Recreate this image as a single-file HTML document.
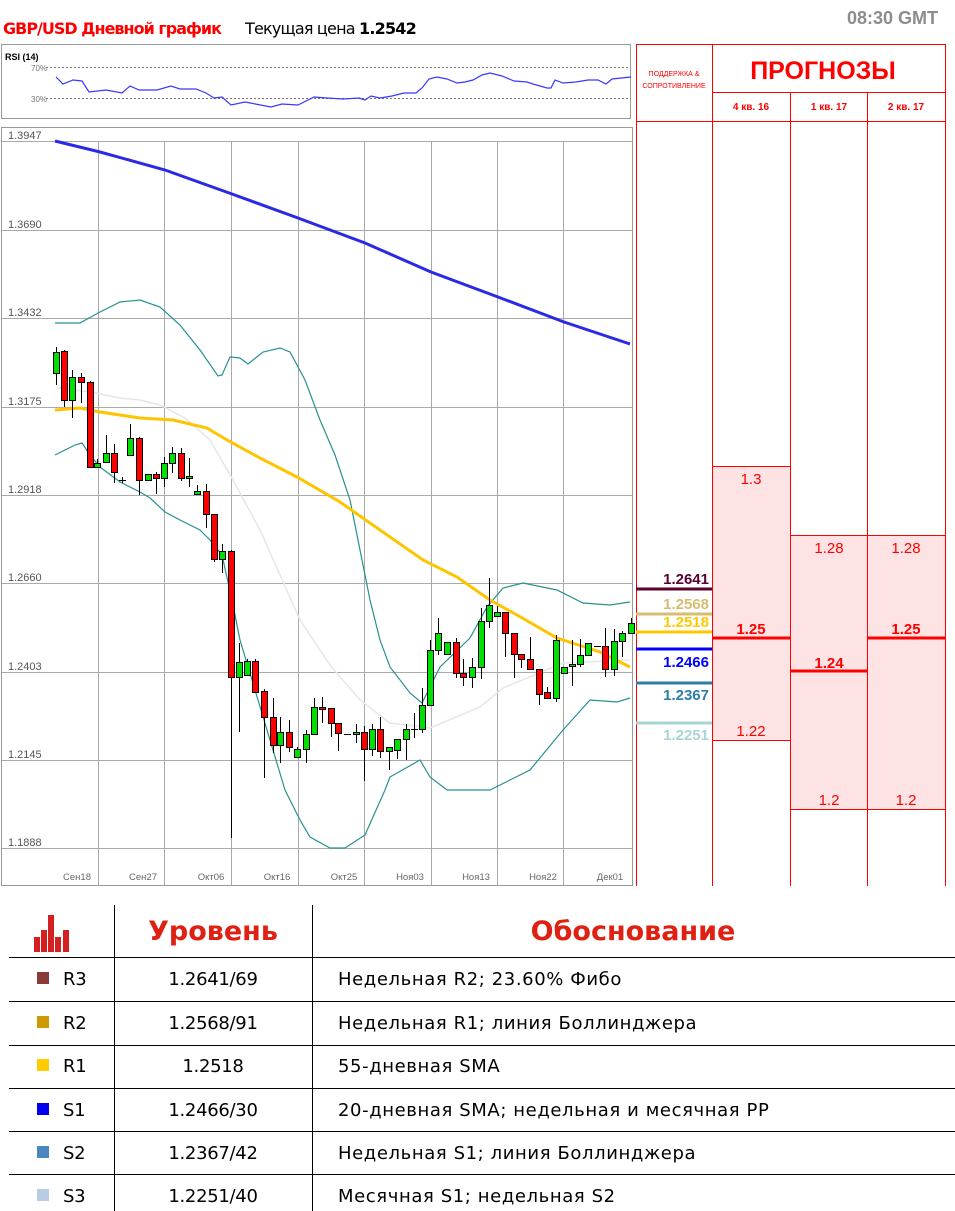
<!DOCTYPE html>
<html><head><meta charset="utf-8"><style>
html,body{margin:0;padding:0;background:#fff;width:955px;height:1211px;overflow:hidden}
svg{display:block;font-family:"Liberation Sans","DejaVu Sans",sans-serif}
</style></head><body>
<svg width="955" height="1211" viewBox="0 0 955 1211" xmlns="http://www.w3.org/2000/svg">
<!-- header -->
<text x="3" y="34" font-size="16" font-weight="bold" fill="#ff0000" font-family="DejaVu Sans,sans-serif" letter-spacing="-1">GBP/USD Дневной график</text>
<text x="245" y="34" font-size="16" fill="#000" font-family="DejaVu Sans,sans-serif" letter-spacing="-0.8">Текущая цена <tspan font-weight="bold">1.2542</tspan></text>
<text x="938" y="24" font-size="18" font-weight="bold" fill="#8c8c8c" text-anchor="end">08:30 GMT</text>

<!-- RSI panel -->
<rect x="1.5" y="44.5" width="629" height="74" fill="#fff" stroke="#999"/>
<text x="5" y="60" font-size="9" font-weight="bold" fill="#000">RSI (14)</text>
<text x="31" y="71" font-size="8" fill="#777">70%</text>
<text x="31" y="102" font-size="8" fill="#777">30%</text>
<line x1="46" y1="67.5" x2="630" y2="67.5" stroke="#777" stroke-dasharray="2,2"/>
<line x1="46" y1="98.5" x2="630" y2="98.5" stroke="#777" stroke-dasharray="2,2"/>
<polyline fill="none" stroke="#3838ff" stroke-width="1.2" points="56,77 63,84 73,80 82,81 89,92 106,90 122,93 130,86 139,90 157,90 171,86 180,89 196,89 206,93 214,98 222,97 231,105 245,102 271,107 282,104 298,105 314,97 327,98 343,99 359,98 365,100 371,96 380,98 392,96 404,93 416,93 422,88 429,79 437,77 447,79 457,83 465,82 473,80 482,75 490,73 502,76 514,81 527,82 533,84 547,88 551,88 555,80 563,83 576,82 588,80 598,80 606,84 612,79 631,77"/>

<!-- main chart frame -->
<rect x="1.5" y="127.5" width="631" height="758" fill="#fff" stroke="#999"/>
<g stroke="#aaa" stroke-width="1">
<line x1="2" y1="141.5" x2="632" y2="141.5"/><line x1="2" y1="230.5" x2="632" y2="230.5"/>
<line x1="2" y1="318.5" x2="632" y2="318.5"/><line x1="2" y1="407.5" x2="632" y2="407.5"/>
<line x1="2" y1="495.5" x2="632" y2="495.5"/><line x1="2" y1="583.5" x2="632" y2="583.5"/>
<line x1="2" y1="672.5" x2="632" y2="672.5"/><line x1="2" y1="760.5" x2="632" y2="760.5"/>
<line x1="2" y1="848.5" x2="632" y2="848.5"/>
<line x1="98.5" y1="141" x2="98.5" y2="885"/><line x1="164.5" y1="141" x2="164.5" y2="885"/>
<line x1="231.5" y1="141" x2="231.5" y2="885"/><line x1="298.5" y1="141" x2="298.5" y2="885"/>
<line x1="364.5" y1="141" x2="364.5" y2="885"/><line x1="431.5" y1="141" x2="431.5" y2="885"/>
<line x1="497.5" y1="141" x2="497.5" y2="885"/><line x1="563.5" y1="141" x2="563.5" y2="885"/>
</g>
<g font-size="11" fill="#555">
<text x="8" y="139">1.3947</text><text x="8" y="228">1.3690</text><text x="8" y="316">1.3432</text>
<text x="8" y="405">1.3175</text><text x="8" y="493">1.2918</text><text x="8" y="581">1.2660</text>
<text x="8" y="670">1.2403</text><text x="8" y="758">1.2145</text><text x="8" y="846">1.1888</text>
</g>
<g font-size="9.5" fill="#666" text-anchor="middle">
<text x="77" y="880">Сен18</text><text x="143" y="880">Сен27</text><text x="211" y="880">Окт06</text>
<text x="277" y="880">Окт16</text><text x="344" y="880">Окт25</text><text x="410" y="880">Ноя03</text>
<text x="476" y="880">Ноя13</text><text x="543" y="880">Ноя22</text><text x="610" y="880">Дек01</text>
</g>

<!-- indicators -->
<polyline fill="none" stroke="#2a2ae6" stroke-width="3" points="55,141 100,152 165,170 232,194 298,218 365,243 431,272 498,297 564,322 630,344"/>
<polyline fill="none" stroke="#e6e6e6" stroke-width="1.5" points="57,388 90,392 120,398 140,400 160,405 185,418 210,440 233,480 260,530 280,575 300,620 330,665 360,700 390,723 430,728 480,707 503,688 563,663 630,660"/>
<polyline fill="none" stroke="#2a9090" stroke-width="1.2" points="55,323 80,323 100,312 120,302 140,300 160,307 180,325 200,350 218,376 222,375 230,357 240,358 248,364 263,352 280,348 290,352 305,380 320,420 335,455 350,500 360,550 370,600 380,640 390,667 410,693 422,703 440,667 470,638 487,607 503,588 523,583 557,590 583,603 610,605 630,602"/>
<polyline fill="none" stroke="#2a9090" stroke-width="1.2" points="55,455 75,445 82,443 90,455 100,467 120,482 140,492 150,498 165,512 180,520 200,530 210,540 222,555 232,600 240,640 255,690 270,740 285,790 300,820 310,837 330,848 345,848 365,835 385,790 390,777 420,760 430,777 447,790 490,790 530,770 563,730 590,700 617,702 630,698"/>
<polyline fill="none" stroke="#ffc400" stroke-width="3" points="55,410 80,408 100,412 140,418 173,420 207,428 227,440 260,458 297,477 340,502 380,530 423,560 457,577 490,600 517,615 557,638 600,652 630,667"/>

<!-- right panel -->
<rect x="712" y="466" width="78" height="274" fill="#fde3e3"/>
<rect x="790" y="535" width="155" height="274" fill="#fde3e3"/>
<g stroke="#ff0000" stroke-width="1" fill="none">
<line x1="636.5" y1="44" x2="636.5" y2="886"/>
<line x1="712.5" y1="44" x2="712.5" y2="886"/>
<line x1="790.5" y1="92" x2="790.5" y2="886"/>
<line x1="867.5" y1="92" x2="867.5" y2="886"/>
<line x1="945.5" y1="44" x2="945.5" y2="886"/>
<line x1="636" y1="44.5" x2="946" y2="44.5"/>
<line x1="712" y1="92.5" x2="946" y2="92.5"/>
<line x1="636" y1="121.5" x2="946" y2="121.5"/>
<line x1="712" y1="466.5" x2="790" y2="466.5"/>
<line x1="712" y1="740.5" x2="790" y2="740.5"/>
<line x1="790" y1="535.5" x2="946" y2="535.5"/>
<line x1="790" y1="809.5" x2="946" y2="809.5"/>
</g>
<g stroke="#ff0000" stroke-width="3">
<line x1="712" y1="638" x2="790" y2="638"/>
<line x1="790" y1="671" x2="867" y2="671"/>
<line x1="867" y1="638" x2="946" y2="638"/>
</g>
<text x="674" y="76" font-size="7" fill="#ff0000" text-anchor="middle">ПОДДЕРЖКА &amp;</text>
<text x="674" y="88" font-size="7" fill="#ff0000" text-anchor="middle">СОПРОТИВЛЕНИЕ</text>
<text x="823" y="79" font-size="25" font-weight="bold" fill="#ff0000" text-anchor="middle">ПРОГНОЗЫ</text>
<g font-size="10" font-weight="bold" fill="#ff0000" text-anchor="middle">
<text x="751" y="110">4 кв. 16</text><text x="829" y="110">1 кв. 17</text><text x="906" y="110">2 кв. 17</text>
</g>
<g font-size="15" fill="#ff0000" text-anchor="middle">
<text x="751" y="484">1.3</text><text x="751" y="736">1.22</text>
<text x="829" y="553">1.28</text><text x="829" y="805">1.2</text>
<text x="906" y="553">1.28</text><text x="906" y="805">1.2</text>
<text x="751" y="634" font-weight="bold">1.25</text>
<text x="829" y="668" font-weight="bold">1.24</text>
<text x="906" y="634" font-weight="bold">1.25</text>
</g>
<g stroke-width="3">
<line x1="636" y1="589" x2="712" y2="589" stroke="#5c0030"/>
<line x1="636" y1="614" x2="712" y2="614" stroke="#d8bc70"/>
<line x1="636" y1="632" x2="712" y2="632" stroke="#ffc800"/>
<line x1="636" y1="649" x2="712" y2="649" stroke="#0000ff"/>
<line x1="636" y1="683" x2="712" y2="683" stroke="#2e7ea6"/>
<line x1="636" y1="723" x2="712" y2="723" stroke="#a8d4d4"/>
</g>
<g font-size="15" font-weight="bold" text-anchor="end">
<text x="709" y="584" fill="#5c0030">1.2641</text>
<text x="709" y="609" fill="#d8bc70">1.2568</text>
<text x="709" y="627" fill="#ffc800">1.2518</text>
<text x="709" y="667" fill="#0000ff">1.2466</text>
<text x="709" y="700" fill="#2e7ea6">1.2367</text>
<text x="709" y="740" fill="#a8d4d4">1.2251</text>
</g>

<!-- bottom table -->
<g stroke="#000" stroke-width="1">
<line x1="114.5" y1="905" x2="114.5" y2="1211"/>
<line x1="312.5" y1="905" x2="312.5" y2="1211"/>
<line x1="9" y1="957.5" x2="955" y2="957.5"/>
<line x1="9" y1="1001.5" x2="955" y2="1001.5"/>
<line x1="9" y1="1045.5" x2="955" y2="1045.5"/>
<line x1="9" y1="1088.5" x2="955" y2="1088.5"/>
<line x1="9" y1="1131.5" x2="955" y2="1131.5"/>
<line x1="9" y1="1174.5" x2="955" y2="1174.5"/>
</g>
<g fill="#d42020">
<rect x="34" y="937" width="6" height="15"/><rect x="41" y="930" width="6" height="22"/>
<rect x="48" y="915" width="6" height="37"/><rect x="55" y="937" width="6" height="15"/>
<rect x="63" y="930" width="6" height="22"/>
</g>
<text x="213" y="940" font-size="27" font-weight="bold" fill="#e02010" text-anchor="middle" font-family="DejaVu Sans,sans-serif">Уровень</text>
<text x="633" y="940" font-size="27" font-weight="bold" fill="#e02010" text-anchor="middle" font-family="DejaVu Sans,sans-serif">Обоснование</text>
<rect x="37" y="972" width="12" height="12" fill="#8b3a3a"/>
<rect x="37" y="1016" width="12" height="12" fill="#cc9900"/>
<rect x="37" y="1059" width="12" height="12" fill="#ffcc00"/>
<rect x="37" y="1103" width="12" height="12" fill="#0000ee"/>
<rect x="37" y="1146" width="12" height="12" fill="#4a86c0"/>
<rect x="37" y="1189" width="12" height="12" fill="#b8cce4"/>
<g font-size="18" fill="#000" font-family="DejaVu Sans,sans-serif" letter-spacing="-0.3">
<text x="63" y="985">R3</text><text x="63" y="1029">R2</text><text x="63" y="1072">R1</text>
<text x="63" y="1116">S1</text><text x="63" y="1159">S2</text><text x="63" y="1202">S3</text>
<g text-anchor="middle">
<text x="213" y="985">1.2641/69</text><text x="213" y="1029">1.2568/91</text><text x="213" y="1072">1.2518</text>
<text x="213" y="1116">1.2466/30</text><text x="213" y="1159">1.2367/42</text><text x="213" y="1202">1.2251/40</text>
</g>
<g letter-spacing="0.6">
<text x="338" y="985">Недельная R2; 23.60% Фибо</text>
<text x="338" y="1029">Недельная R1; линия Боллинджера</text>
<text x="338" y="1072">55-дневная SMA</text>
<text x="338" y="1116">20-дневная SMA; недельная и месячная PP</text>
<text x="338" y="1159">Недельная S1; линия Боллинджера</text>
<text x="338" y="1202">Месячная S1; недельная S2</text>
</g>
</g>

<g stroke="#000" stroke-width="1">
<line x1="56.5" y1="347" x2="56.5" y2="385"/><rect x="53.5" y="352.5" width="6" height="21" fill="#00e000"/>
<line x1="64.5" y1="350" x2="64.5" y2="407"/><rect x="61.5" y="351.5" width="6" height="49" fill="#ff0000"/>
<line x1="72.5" y1="370" x2="72.5" y2="418"/><rect x="69.5" y="377.5" width="6" height="23" fill="#00e000"/>
<line x1="81.5" y1="373" x2="81.5" y2="403"/><rect x="78.5" y="377.5" width="6" height="5" fill="#ff0000"/>
<line x1="90.5" y1="381" x2="90.5" y2="467"/><rect x="87.5" y="382.5" width="6" height="85" fill="#ff0000"/>
<line x1="97.5" y1="459" x2="97.5" y2="467"/><rect x="94.5" y="463.5" width="6" height="4" fill="#00e000"/>
<line x1="106.5" y1="435" x2="106.5" y2="462"/><rect x="103.5" y="453.5" width="6" height="9" fill="#00e000"/>
<line x1="114.5" y1="444" x2="114.5" y2="483"/><rect x="111.5" y="453.5" width="6" height="19" fill="#ff0000"/>
<line x1="122.5" y1="477" x2="122.5" y2="483"/><line x1="119" y1="480.5" x2="126" y2="480.5"/>
<line x1="130.5" y1="424" x2="130.5" y2="455"/><rect x="127.5" y="438.5" width="6" height="17" fill="#00e000"/>
<line x1="139.5" y1="437" x2="139.5" y2="495"/><rect x="136.5" y="438.5" width="6" height="42" fill="#ff0000"/>
<line x1="148.5" y1="474" x2="148.5" y2="481"/><rect x="145.5" y="474.5" width="6" height="6" fill="#00e000"/>
<line x1="156.5" y1="472" x2="156.5" y2="494"/><rect x="153.5" y="474.5" width="6" height="4" fill="#ff0000"/>
<line x1="164.5" y1="457" x2="164.5" y2="487"/><rect x="161.5" y="463.5" width="6" height="15" fill="#00e000"/>
<line x1="172.5" y1="447" x2="172.5" y2="473"/><rect x="169.5" y="453.5" width="6" height="10" fill="#00e000"/>
<line x1="181.5" y1="448" x2="181.5" y2="481"/><rect x="178.5" y="453.5" width="6" height="25" fill="#ff0000"/>
<line x1="189.5" y1="458" x2="189.5" y2="487"/><rect x="186.5" y="476.5" width="6" height="2" fill="#00e000"/>
<line x1="197.5" y1="485" x2="197.5" y2="494"/><rect x="194.5" y="491.5" width="6" height="3" fill="#00e000"/>
<line x1="206.5" y1="484" x2="206.5" y2="528"/><rect x="203.5" y="491.5" width="6" height="23" fill="#ff0000"/>
<line x1="214.5" y1="514" x2="214.5" y2="562"/><rect x="211.5" y="514.5" width="6" height="45" fill="#ff0000"/>
<line x1="222.5" y1="544" x2="222.5" y2="573"/><rect x="219.5" y="551.5" width="6" height="8" fill="#00e000"/>
<line x1="231.5" y1="550" x2="231.5" y2="838"/><rect x="228.5" y="551.5" width="6" height="126" fill="#ff0000"/>
<line x1="239.5" y1="643" x2="239.5" y2="732"/><rect x="236.5" y="662.5" width="6" height="15" fill="#00e000"/>
<line x1="247.5" y1="659" x2="247.5" y2="675"/><rect x="244.5" y="661.5" width="6" height="14" fill="#00e000"/>
<line x1="255.5" y1="659" x2="255.5" y2="693"/><rect x="252.5" y="661.5" width="6" height="31" fill="#ff0000"/>
<line x1="264.5" y1="689" x2="264.5" y2="778"/><rect x="261.5" y="691.5" width="6" height="26" fill="#ff0000"/>
<line x1="273.5" y1="698" x2="273.5" y2="753"/><rect x="270.5" y="717.5" width="6" height="28" fill="#ff0000"/>
<line x1="280.5" y1="717" x2="280.5" y2="763"/><rect x="277.5" y="732.5" width="6" height="13" fill="#00e000"/>
<line x1="289.5" y1="720" x2="289.5" y2="752"/><rect x="286.5" y="732.5" width="6" height="15" fill="#ff0000"/>
<line x1="297.5" y1="747" x2="297.5" y2="757"/><rect x="294.5" y="749.5" width="6" height="8" fill="#00e000"/>
<line x1="306.5" y1="730" x2="306.5" y2="763"/><rect x="303.5" y="734.5" width="6" height="15" fill="#00e000"/>
<line x1="314.5" y1="698" x2="314.5" y2="734"/><rect x="311.5" y="707.5" width="6" height="27" fill="#00e000"/>
<line x1="322.5" y1="697" x2="322.5" y2="723"/><rect x="319.5" y="707.5" width="6" height="2" fill="#ff0000"/>
<line x1="331.5" y1="708" x2="331.5" y2="737"/><rect x="328.5" y="708.5" width="6" height="15" fill="#ff0000"/>
<line x1="338.5" y1="723" x2="338.5" y2="751"/><rect x="335.5" y="723.5" width="6" height="10" fill="#ff0000"/>
<line x1="344" y1="734.5" x2="351" y2="734.5"/>
<line x1="356.5" y1="724" x2="356.5" y2="743"/><rect x="353.5" y="732.5" width="6" height="2" fill="#00e000"/>
<line x1="364.5" y1="726" x2="364.5" y2="781"/><rect x="361.5" y="732.5" width="6" height="17" fill="#ff0000"/>
<line x1="372.5" y1="724" x2="372.5" y2="756"/><rect x="369.5" y="729.5" width="6" height="20" fill="#00e000"/>
<line x1="380.5" y1="717" x2="380.5" y2="758"/><rect x="377.5" y="729.5" width="6" height="22" fill="#ff0000"/>
<line x1="389.5" y1="747" x2="389.5" y2="770"/><rect x="386.5" y="747.5" width="6" height="4" fill="#00e000"/>
<line x1="397.5" y1="739" x2="397.5" y2="759"/><rect x="394.5" y="739.5" width="6" height="11" fill="#00e000"/>
<line x1="406.5" y1="724" x2="406.5" y2="760"/><rect x="403.5" y="729.5" width="6" height="10" fill="#00e000"/>
<line x1="414.5" y1="713" x2="414.5" y2="738"/><line x1="411" y1="729.5" x2="418" y2="729.5"/>
<line x1="422.5" y1="688" x2="422.5" y2="733"/><rect x="419.5" y="705.5" width="6" height="24" fill="#00e000"/>
<line x1="430.5" y1="640" x2="430.5" y2="705"/><rect x="427.5" y="650.5" width="6" height="55" fill="#00e000"/>
<line x1="438.5" y1="618" x2="438.5" y2="655"/><rect x="435.5" y="633.5" width="6" height="17" fill="#00e000"/>
<line x1="447.5" y1="642" x2="447.5" y2="654"/><rect x="444.5" y="642.5" width="6" height="12" fill="#00e000"/>
<line x1="456.5" y1="638" x2="456.5" y2="678"/><rect x="453.5" y="642.5" width="6" height="31" fill="#ff0000"/>
<line x1="463.5" y1="659" x2="463.5" y2="686"/><rect x="460.5" y="673.5" width="6" height="4" fill="#ff0000"/>
<line x1="472.5" y1="658" x2="472.5" y2="688"/><rect x="469.5" y="667.5" width="6" height="10" fill="#00e000"/>
<line x1="481.5" y1="608" x2="481.5" y2="679"/><rect x="478.5" y="621.5" width="6" height="46" fill="#00e000"/>
<line x1="489.5" y1="578" x2="489.5" y2="628"/><rect x="486.5" y="605.5" width="6" height="16" fill="#00e000"/>
<line x1="497.5" y1="606" x2="497.5" y2="616"/><rect x="494.5" y="612.5" width="6" height="4" fill="#00e000"/>
<line x1="505.5" y1="612" x2="505.5" y2="657"/><rect x="502.5" y="612.5" width="6" height="21" fill="#ff0000"/>
<line x1="514.5" y1="633" x2="514.5" y2="678"/><rect x="511.5" y="633.5" width="6" height="21" fill="#ff0000"/>
<line x1="521.5" y1="654" x2="521.5" y2="668"/><rect x="518.5" y="654.5" width="6" height="5" fill="#ff0000"/>
<line x1="530.5" y1="637" x2="530.5" y2="669"/><rect x="527.5" y="659.5" width="6" height="10" fill="#ff0000"/>
<line x1="539.5" y1="669" x2="539.5" y2="705"/><rect x="536.5" y="669.5" width="6" height="25" fill="#ff0000"/>
<line x1="547.5" y1="687" x2="547.5" y2="698"/><rect x="544.5" y="692.5" width="6" height="6" fill="#ff0000"/>
<line x1="556.5" y1="635" x2="556.5" y2="702"/><rect x="553.5" y="640.5" width="6" height="58" fill="#00e000"/>
<line x1="564.5" y1="667" x2="564.5" y2="673"/><rect x="561.5" y="667.5" width="6" height="6" fill="#00e000"/>
<line x1="572.5" y1="640" x2="572.5" y2="686"/><rect x="569.5" y="664.5" width="6" height="2" fill="#00e000"/>
<line x1="580.5" y1="639" x2="580.5" y2="667"/><rect x="577.5" y="655.5" width="6" height="9" fill="#00e000"/>
<line x1="588.5" y1="643" x2="588.5" y2="655"/><rect x="585.5" y="643.5" width="6" height="12" fill="#00e000"/>
<line x1="594" y1="646.5" x2="601" y2="646.5"/>
<line x1="605.5" y1="628" x2="605.5" y2="677"/><rect x="602.5" y="646.5" width="6" height="23" fill="#ff0000"/>
<line x1="614.5" y1="629" x2="614.5" y2="676"/><rect x="611.5" y="641.5" width="6" height="28" fill="#00e000"/>
<line x1="622.5" y1="631" x2="622.5" y2="657"/><rect x="619.5" y="633.5" width="6" height="8" fill="#00e000"/>
<line x1="631.5" y1="618" x2="631.5" y2="633"/><rect x="628.5" y="623.5" width="6" height="10" fill="#00e000"/>
</g>
</svg>
</body></html>
